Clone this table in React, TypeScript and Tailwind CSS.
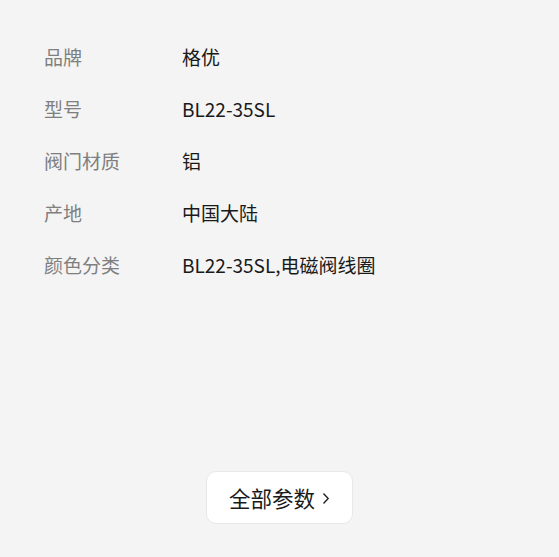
const rows = [
  { label: "品牌", value: "格优" },
  { label: "型号", value: "BL22-35SL" },
  { label: "阀门材质", value: "铝" },
  { label: "产地", value: "中国大陆" },
  { label: "颜色分类", value: "BL22-35SL,电磁阀线圈" },
]

export default function App() {
  return (
    <div
      className="min-h-[557px] bg-[#f4f4f4] pt-[31px] pb-[33px]"
      style={{ fontFamily: '"Noto Sans CJK SC", "Noto Sans", sans-serif' }}
    >
      {/* Params */}
      <div className="px-[44px]">
        {rows.map((row) => (
          <div key={row.label} className="flex h-[52px] items-center text-[19px]">
            <div className="w-[138px] text-[#7f7f7f]">{row.label}</div>
            <div className="text-[#1a1a1a]">{row.value}</div>
          </div>
        ))}
      </div>

      {/* More button */}
      <div className="mt-[180px] flex justify-center">
        <button className="flex h-[53px] w-[147px] items-center justify-center gap-[7px] rounded-[10px] border border-[#e8e8e8] bg-white pt-[2px] text-[21.5px] text-[#1a1a1a]">
          <span>全部参数</span>
          <svg width="8" height="13" viewBox="0 0 8 13" fill="none" stroke="#1a1a1a" strokeWidth="1.3">
            <path d="M1.5 1.5 L6.2 6.5 L1.5 11.5" />
          </svg>
        </button>
      </div>
    </div>
  )
}
